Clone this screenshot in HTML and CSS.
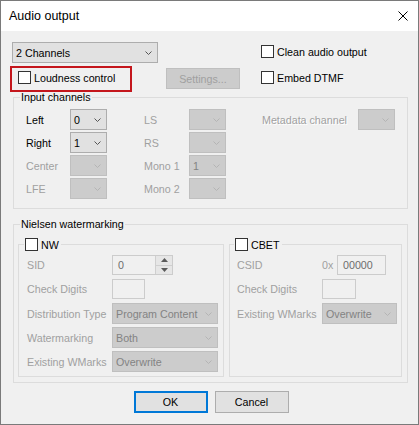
FILE: index.html
```html
<!DOCTYPE html>
<html>
<head>
<meta charset="utf-8">
<title>Audio output</title>
<link rel="stylesheet" href="styles.css">
</head>
<body>
<div class="window">
  <div class="titlebar">
    <span class="title">Audio output</span>
    <svg class="close" width="10" height="10" viewBox="0 0 10 10"><path d="M0.5 0.5L9.5 9.5M9.5 0.5L0.5 9.5" stroke="#000" stroke-width="1" fill="none"/></svg>
  </div>
  <div class="content">
    <div class="top">
      <div class="top-left">
        <div class="combo combo-main"><span>2 Channels</span><svg class="chev" width="7" height="4" viewBox="0 0 7 4"><path d="M0.5 0.5L3.5 3.5L6.5 0.5" fill="none" stroke="currentColor"/></svg></div>
        <div class="top-row2">
          <div class="highlight"><div class="check"><span class="box"></span><span>Loudness control</span></div></div>
          <div class="btn btn-disabled settings">Settings...</div>
        </div>
      </div>
      <div class="top-right">
        <div class="check"><span class="box"></span><span>Clean audio output</span></div>
        <div class="check"><span class="box"></span><span>Embed DTMF</span></div>
      </div>
    </div>

    <div class="group input-group">
      <div class="group-label">Input channels</div>
      <div class="channels">
        <div class="clabel">Left</div>
        <div class="combo"><span>0</span><svg class="chev" width="7" height="4" viewBox="0 0 7 4"><path d="M0.5 0.5L3.5 3.5L6.5 0.5" fill="none" stroke="currentColor"/></svg></div>
        <div class="clabel dis pl2">LS</div>
        <div class="combo combo-dis"><span></span><svg class="chev" width="7" height="4" viewBox="0 0 7 4"><path d="M0.5 0.5L3.5 3.5L6.5 0.5" fill="none" stroke="currentColor"/></svg></div>
        <div class="clabel dis pl3 emboss">Metadata channel</div>
        <div class="combo combo-dis"><span></span><svg class="chev" width="7" height="4" viewBox="0 0 7 4"><path d="M0.5 0.5L3.5 3.5L6.5 0.5" fill="none" stroke="currentColor"/></svg></div>

        <div class="clabel first">Right</div>
        <div class="combo"><span>1</span><svg class="chev" width="7" height="4" viewBox="0 0 7 4"><path d="M0.5 0.5L3.5 3.5L6.5 0.5" fill="none" stroke="currentColor"/></svg></div>
        <div class="clabel dis pl2">RS</div>
        <div class="combo combo-dis"><span></span><svg class="chev" width="7" height="4" viewBox="0 0 7 4"><path d="M0.5 0.5L3.5 3.5L6.5 0.5" fill="none" stroke="currentColor"/></svg></div>

        <div class="clabel dis first">Center</div>
        <div class="combo combo-dis"><span></span><svg class="chev" width="7" height="4" viewBox="0 0 7 4"><path d="M0.5 0.5L3.5 3.5L6.5 0.5" fill="none" stroke="currentColor"/></svg></div>
        <div class="clabel dis pl2">Mono 1</div>
        <div class="combo combo-dis"><span>1</span><svg class="chev" width="7" height="4" viewBox="0 0 7 4"><path d="M0.5 0.5L3.5 3.5L6.5 0.5" fill="none" stroke="currentColor"/></svg></div>

        <div class="clabel dis first">LFE</div>
        <div class="combo combo-dis"><span></span><svg class="chev" width="7" height="4" viewBox="0 0 7 4"><path d="M0.5 0.5L3.5 3.5L6.5 0.5" fill="none" stroke="currentColor"/></svg></div>
        <div class="clabel dis pl2">Mono 2</div>
        <div class="combo combo-dis"><span></span><svg class="chev" width="7" height="4" viewBox="0 0 7 4"><path d="M0.5 0.5L3.5 3.5L6.5 0.5" fill="none" stroke="currentColor"/></svg></div>
      </div>
    </div>

    <div class="group nielsen">
      <div class="group-label">Nielsen watermarking</div>
      <div class="subgroups">
        <div class="group sub nw">
          <div class="sub-label"><span class="box"></span><span>NW</span></div>
          <div class="form">
            <div class="frow">
              <span class="flabel dis">SID</span>
              <div class="edit spin"><span>0</span>
                <div class="spinbtns">
                  <span class="sb"><svg width="7" height="4" viewBox="0 0 7 4"><path d="M0 4L3.5 0L7 4Z" fill="#5a5a5a"/></svg></span>
                  <span class="sb sb-down"><svg width="7" height="4" viewBox="0 0 7 4"><path d="M0 0L3.5 4L7 0Z" fill="#5a5a5a"/></svg></span>
                </div>
              </div>
            </div>
            <div class="frow">
              <span class="flabel dis">Check Digits</span>
              <div class="edit digits"></div>
            </div>
            <div class="frow mt1 crow">
              <span class="flabel dis">Distribution Type</span>
              <div class="combo combo-dis wide"><span>Program Content</span><svg class="chev" width="7" height="4" viewBox="0 0 7 4"><path d="M0.5 0.5L3.5 3.5L6.5 0.5" fill="none" stroke="currentColor"/></svg></div>
            </div>
            <div class="frow crow">
              <span class="flabel dis">Watermarking</span>
              <div class="combo combo-dis wide"><span>Both</span><svg class="chev" width="7" height="4" viewBox="0 0 7 4"><path d="M0.5 0.5L3.5 3.5L6.5 0.5" fill="none" stroke="currentColor"/></svg></div>
            </div>
            <div class="frow crow">
              <span class="flabel dis">Existing WMarks</span>
              <div class="combo combo-dis wide"><span>Overwrite</span><svg class="chev" width="7" height="4" viewBox="0 0 7 4"><path d="M0.5 0.5L3.5 3.5L6.5 0.5" fill="none" stroke="currentColor"/></svg></div>
            </div>
          </div>
        </div>
        <div class="group sub cbet">
          <div class="sub-label"><span class="box"></span><span>CBET</span></div>
          <div class="form">
            <div class="frow">
              <span class="flabel dis">CSID</span>
              <span class="hex dis">0x</span>
              <div class="edit csid"><span>00000</span></div>
            </div>
            <div class="frow">
              <span class="flabel dis">Check Digits</span>
              <div class="edit digits2"></div>
            </div>
            <div class="frow crow">
              <span class="flabel dis">Existing WMarks</span>
              <div class="combo combo-dis narrow"><span>Overwrite</span><svg class="chev" width="7" height="4" viewBox="0 0 7 4"><path d="M0.5 0.5L3.5 3.5L6.5 0.5" fill="none" stroke="currentColor"/></svg></div>
            </div>
          </div>
        </div>
      </div>
    </div>

    <div class="buttons">
      <div class="btn btn-default">OK</div>
      <div class="btn">Cancel</div>
    </div>
  </div>
</div>
</body>
</html>
```

FILE: styles.css
```css
* { box-sizing: border-box; }
html, body { margin: 0; padding: 0; }
body {
  font-family: "Liberation Sans", Arial, sans-serif;
  font-size: 10.7px;
  color: #000;
  background: #fff;
}
.window {
  width: 419px;
  height: 425px;
  border: 1px solid #7a7a7a;
  background: #f0f0f0;
  display: flex;
  flex-direction: column;
}
.titlebar {
  height: 30px;
  flex: none;
  background: #fff;
  display: flex;
  align-items: center;
  justify-content: space-between;
  padding: 0 10px 0 8px;
}
.title { font-size: 12.5px; }
.close { display: block; }
.content { flex: 1; padding: 11px 11px 0 11px; }

.top { display: flex; }
.top-left { width: 249px; display: flex; flex-direction: column; }
.top-right { display: flex; flex-direction: column; gap: 13px; padding-top: 3px; }

.combo {
  height: 21px;
  border: 1px solid #adadad;
  background: #e1e1e1;
  display: flex;
  align-items: center;
  justify-content: space-between;
  padding: 0 5px 0 3px;
  color: #000;
  white-space: nowrap;
}
.combo .chev { color: #555; flex: none; }
.combo-main { width: 146px; }
.combo-dis { background: #cccccc; border-color: #bfbfbf; color: #838383; }
.combo-dis .chev { color: #b4b4b4; }
.channels .combo { padding-left: 3px; }

.top-row2 { display: flex; align-items: flex-start; margin-top: 3px; }
.highlight {
  width: 122px;
  height: 26px;
  margin-left: -2px;
  border: 2px solid #c4161c;
  padding: 3px 0 0 6px;
}
.check { display: flex; align-items: center; height: 13px; gap: 3px; white-space: nowrap; }
.box { width: 13px; height: 13px; border: 1px solid #333; background: #fff; flex: none; }

.btn {
  width: 74px;
  height: 22px;
  display: flex;
  align-items: center;
  justify-content: center;
  border: 1px solid #adadad;
  background: #e1e1e1;
}
.btn-disabled { background: #cccccc; border-color: #bfbfbf; color: #a0a0a0; }
.settings { margin-left: 34px; margin-top: 2px; height: 21px; }
.btn-default { border: 2px solid #0078d7; }

.group { border: 1px solid #dcdcdc; }
.group-label {
  display: table;
  margin: -7px 0 0 6px;
  padding: 0 1px;
  background: #f0f0f0;
  line-height: 13px;
  height: 13px;
}
.input-group { margin: 5px 0 0 1px; width: 395px; height: 112px; }
.channels {
  display: grid;
  grid-template-columns: 44px 37px 82px 37px 132px 37px;
  grid-auto-rows: 21px;
  row-gap: 2px;
  margin: 5px 0 0 12px;
}
.clabel { display: flex; align-items: center; white-space: nowrap; }
.first { grid-column: 1; }
.pl2 { padding-left: 37px; }
.pl3 { padding-left: 36px; }
.dis { color: #a0a0a0; }
.emboss { text-shadow: 1px 1px 0 #fff; }

.nielsen { margin: 15px 0 0 1px; width: 395px; height: 159px; }
.subgroups { display: flex; gap: 5px; margin: 13px 0 0 4px; }
.sub { height: 133px; }
.nw { width: 206px; }
.cbet { width: 173px; }
.sub-label {
  display: flex;
  align-items: center;
  gap: 3px;
  width: max-content;
  height: 13px;
  margin: -7px 0 0 5px;
  padding: 0 2px 0 1px;
  background: #f0f0f0;
}
.cbet .sub-label { margin-left: 4px; }
.form { margin: 4px 0 0 8px; }
.cbet .form { margin-left: 7px; }
.frow { display: flex; align-items: center; margin-bottom: 4px; }
.frow.crow { margin-bottom: 3px; }
.mt1 { margin-top: 1px; }
.flabel { width: 85px; white-space: nowrap; flex: none; }
.hex { width: 15px; flex: none; }

.edit {
  height: 20px;
  border: 1px solid #cccccc;
  background: #f0f0f0;
  color: #6d6d6d;
  display: flex;
  align-items: center;
  padding-left: 5px;
}
.spin { width: 61px; padding-right: 0; }
.spinbtns {
  margin-left: auto;
  width: 17px;
  height: 18px;
  display: flex;
  flex-direction: column;
  border-left: 1px solid #cfcfcf;
}
.sb { flex: 1; background: #e6e6e6; display: flex; align-items: center; justify-content: center; }
.sb svg { display: block; }
.sb-down { border-top: 1px solid #cfcfcf; }
.digits { width: 33px; }
.digits2 { width: 34px; }
.csid { width: 49px; }
.wide { width: 106px; }
.narrow { width: 75px; }

.buttons { display: flex; justify-content: center; gap: 7px; margin-top: 8px; padding-left: 3px; }
```
